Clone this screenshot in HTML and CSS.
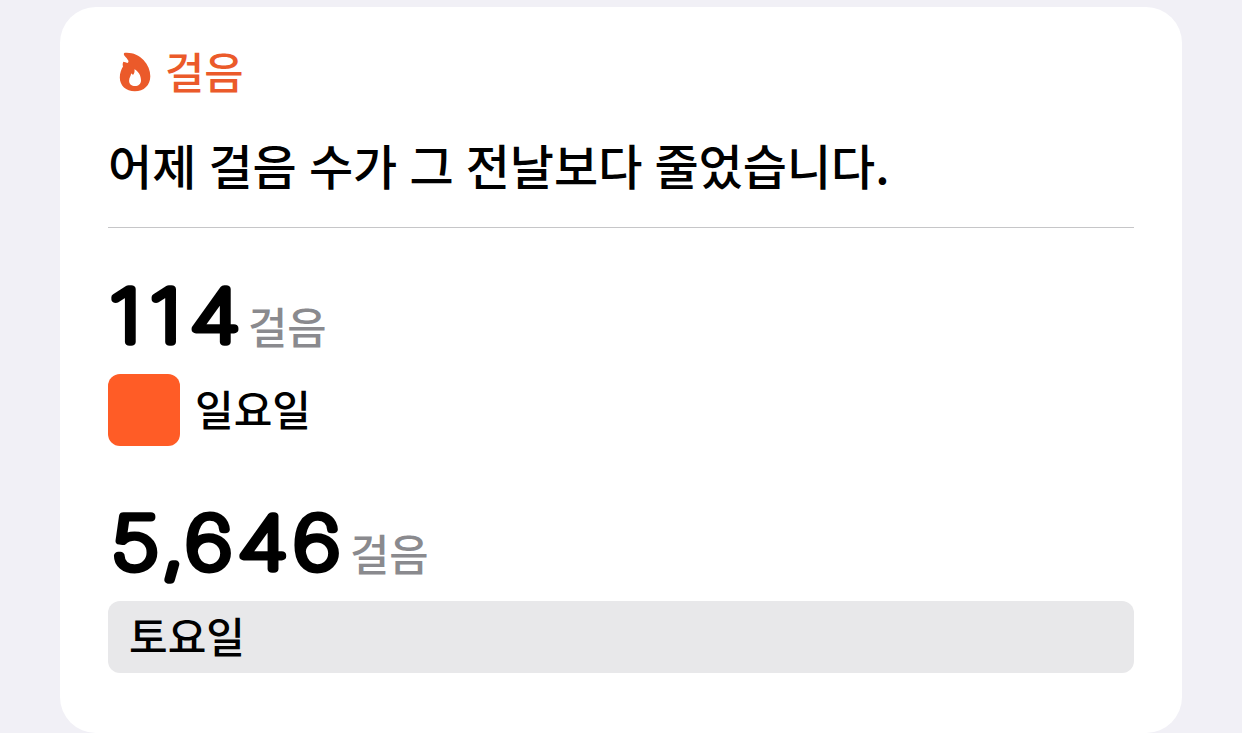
FILE: index.html
```
<!DOCTYPE html>
<html lang="ko">

<head>
    <meta charset="utf-8">
    <meta name="viewport" content="width=device-width, initial-scale=1.0">
    <title>걸음</title>
    <link rel="stylesheet" href="styles.css">
</head>

<body>
    <article class="card">
        <header class="category">
            <svg class="flame" viewBox="0 0 32 40" aria-hidden="true">
                <path fill-rule="evenodd" d="M6 .8C13 .2 20 3 24.500 8c4.500 4.800 6.800 10.500 6.800 16.200C31.300 33 25 39.300 15.800 39.300 7 39.300 .8 33.500 .8 25.500c0-4.500 1.500-8 3.200-11-.5-1.600-.4-3.600.4-4.700.9.100 2.400.5 3.800 1.200.9-.2 1.500-1 1.200-2.200C8.800 7.400 7 5.200 5.300 3.400c-.8-.9-.6-2.400.7-2.600zM15.400 17.200c.6 2.700-.2 4.300-1.500 5.800-.4-.8-1-1.300-1.800-1.500.1 2.200-2 4-2 7.200 0 3.300 2.600 5.400 5.900 5.400 3.500 0 6-2.300 6-5.700 0-4.700-2.500-9.200-6.600-11.200z"/>
            </svg>
            <span>걸음</span>
        </header>
        <h1 class="headline">어제 걸음 수가 그 전날보다 줄었습니다.</h1>
        <section class="day">
            <p class="steps">
                <svg class="number" width="133" height="84"><text x="1.6 35.8 69.8" y="67.500">114</text></svg>
                <span class="unit">걸음</span>
            </p>
            <div class="row">
                <div class="bar bar-today"></div>
                <span class="name">일요일</span>
            </div>
        </section>
        <section class="day">
            <p class="steps">
                <svg class="number" width="235" height="84"><text x="2.8 46 65.6 110.7 157.9" y="67.500">5,646</text></svg>
                <span class="unit">걸음</span>
            </p>
            <div class="row">
                <div class="bar bar-before"><span class="name">토요일</span></div>
            </div>
        </section>
    </article>
</body>

</html>
```
FILE: styles.css
```
* {
    box-sizing: border-box;
}

body {
    margin: 0;
    padding-top: 7px;
    height: 733px;
    overflow: hidden;
    background-color: #f1f0f6;
    font-family: "Noto Sans CJK KR", sans-serif;
    font-weight: 500;
    color: #000;
}

h1,
p {
    margin: 0;
}

.card {
    height: 726px;
    margin: 0 60px;
    padding: 33px 48px 0;
    border-radius: 36px;
    background-color: #fff;
}

.category {
    display: flex;
    align-items: center;
    gap: 14px;
    height: 60px;
    padding-left: 11px;
    font-size: 42.7px;
    line-height: 60px;
    color: #eb5a2a;
}

.flame {
    width: 32px;
    height: 40px;
    margin-top: 4px;
    fill: #eb5a2a;
}

.headline {
    height: 128px;
    padding-top: 29px;
    border-bottom: 1px solid #c6c6c8;
    font-size: 48px;
    font-weight: 500;
    line-height: 70px;
    word-spacing: -1.3px;
    white-space: nowrap;
}

.day {
    height: 227px;
    padding-top: 46px;
}

.steps {
    display: flex;
    gap: 7px;
    height: 100px;
}

/* thin digits with a round outline, so the ends come out rounded */
.number {
    overflow: visible;
    font-family: Inter, sans-serif;
    font-size: 72.5px;
    font-weight: 100;
    fill: #000;
    stroke: #000;
    stroke-width: 7.6px;
    stroke-linejoin: round;
}

.number text {
    transform: scaleX(1.17);
}

.unit {
    padding-top: 9px;
    font-size: 42.7px;
    line-height: 84px;
    color: #8a8a8e;
}

.row {
    display: flex;
    align-items: center;
    gap: 15px;
    height: 72px;
}

.bar {
    display: flex;
    align-items: center;
    height: 72px;
    border-radius: 12px;
}

.bar-today {
    width: 72px;
    background-color: #ff5c26;
}

.bar-before {
    flex: 1;
    padding-left: 21px;
    background-color: #e8e8ea;
}

.name {
    padding-bottom: 4px;
    font-size: 42px;
    line-height: 68px;
}
```
